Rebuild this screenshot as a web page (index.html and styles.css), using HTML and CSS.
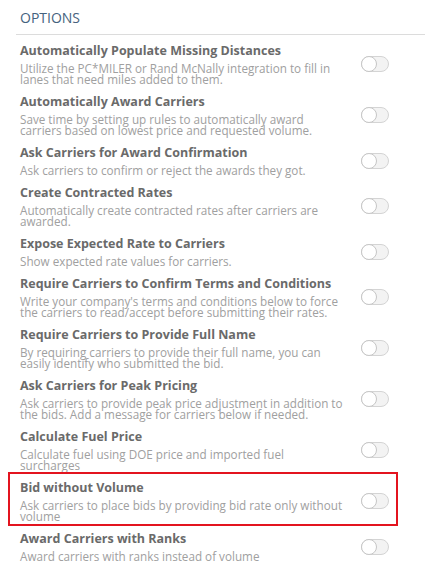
FILE: index.html
```html
<!DOCTYPE html>
<html>
<head>
<meta charset="utf-8">
<link rel="stylesheet" href="styles.css">
</head>
<body>
<div class="panel">
  <div class="header">OPTIONS</div>
  <div class="list">
    <div class="row">
      <div class="text">
        <div class="title">Automatically Populate Missing Distances</div>
        <div class="desc">Utilize the PC*MILER or Rand McNally integration to fill in lanes that need miles added to them.</div>
      </div>
      <span class="toggle"><span class="knob"></span></span>
    </div>
    <div class="row">
      <div class="text">
        <div class="title">Automatically Award Carriers</div>
        <div class="desc">Save time by setting up rules to automatically award carriers based on lowest price and requested volume.</div>
      </div>
      <span class="toggle"><span class="knob"></span></span>
    </div>
    <div class="row">
      <div class="text">
        <div class="title">Ask Carriers for Award Confirmation</div>
        <div class="desc">Ask carriers to confirm or reject the awards they got.</div>
      </div>
      <span class="toggle"><span class="knob"></span></span>
    </div>
    <div class="row">
      <div class="text">
        <div class="title">Create Contracted Rates</div>
        <div class="desc">Automatically create contracted rates after carriers are awarded.</div>
      </div>
      <span class="toggle"><span class="knob"></span></span>
    </div>
    <div class="row">
      <div class="text">
        <div class="title">Expose Expected Rate to Carriers</div>
        <div class="desc">Show expected rate values for carriers.</div>
      </div>
      <span class="toggle"><span class="knob"></span></span>
    </div>
    <div class="row">
      <div class="text">
        <div class="title">Require Carriers to Confirm Terms and Conditions</div>
        <div class="desc">Write your company's terms and conditions below to force the carriers to read/accept before submitting their rates.</div>
      </div>
      <span class="toggle"><span class="knob"></span></span>
    </div>
    <div class="row">
      <div class="text">
        <div class="title">Require Carriers to Provide Full Name</div>
        <div class="desc">By requiring carriers to provide their full name, you can easily identify who submitted the bid.</div>
      </div>
      <span class="toggle"><span class="knob"></span></span>
    </div>
    <div class="row">
      <div class="text">
        <div class="title">Ask Carriers for Peak Pricing</div>
        <div class="desc">Ask carriers to provide peak price adjustment in addition to the bids. Add a message for carriers below if needed.</div>
      </div>
      <span class="toggle"><span class="knob"></span></span>
    </div>
    <div class="row">
      <div class="text">
        <div class="title">Calculate Fuel Price</div>
        <div class="desc">Calculate fuel using DOE price and imported fuel surcharges</div>
      </div>
      <span class="toggle"><span class="knob"></span></span>
    </div>
    <div class="row highlighted">
      <div class="text">
        <div class="title">Bid without Volume</div>
        <div class="desc">Ask carriers to place bids by providing bid rate only without volume</div>
      </div>
      <span class="toggle"><span class="knob"></span></span>
    </div>
    <div class="row">
      <div class="text">
        <div class="title">Award Carriers with Ranks</div>
        <div class="desc">Award carriers with ranks instead of volume</div>
      </div>
      <span class="toggle"><span class="knob"></span></span>
    </div>
  </div>
</div>
</body>
</html>
```
FILE: styles.css
```css
html, body {
  margin: 0;
  padding: 0;
  background: #ffffff;
}
body {
  font-family: "Open Sans", "Liberation Sans", sans-serif;
}
.panel {
  width: 425px;
}
.header {
  margin-left: 16px;
  padding: 10px 0 8px 4px;
  border-bottom: 1px solid #dcdcdc;
  font-size: 14px;
  line-height: 16px;
  color: #45627e;
}
.list {
  padding-top: 4px;
  display: flex;
  flex-direction: column;
}
.row {
  position: relative;
  margin-left: 9px;
  width: 388px;
  box-sizing: border-box;
  padding: 4px 8px 5px 11px;
  display: flex;
  align-items: center;
}
.row.highlighted::before {
  content: "";
  position: absolute;
  top: -4px;
  bottom: 1px;
  left: -1px;
  right: -1px;
  border: 2px solid #e3141f;
  pointer-events: none;
}
.text {
  width: 324px;
}
.title {
  font-size: 12.5px;
  font-weight: 700;
  line-height: 16px;
  color: #6a6a6a;
}
.desc {
  margin-top: 4px;
  font-size: 11.7px;
  line-height: 11px;
  color: #a0a0a0;
}
.toggle {
  margin-left: auto;
  position: relative;
  display: block;
  width: 28px;
  height: 16px;
  box-sizing: border-box;
  border: 1px solid #d4d4d4;
  border-radius: 8px;
  background: #f3f3f3;
}
.knob {
  position: absolute;
  left: -1px;
  top: -1px;
  width: 16px;
  height: 16px;
  box-sizing: border-box;
  border: 1px solid #c6c6c6;
  border-radius: 50%;
  background: #ffffff;
}
```
